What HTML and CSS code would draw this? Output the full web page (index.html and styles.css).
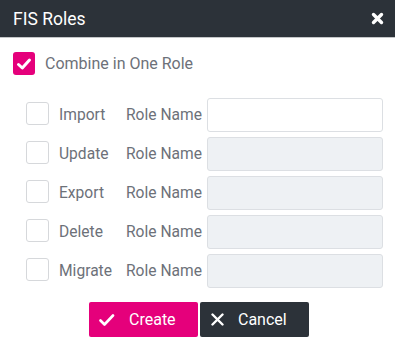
FILE: index.html
```html
<!DOCTYPE html>
<html lang="en">
<head>
    <meta charset="UTF-8">
    <title>FIS Roles</title>
    <link rel="stylesheet" href="styles.css">
</head>
<body>
    <!-- Dialog -->
    <div class="dialog">
        <div class="dialog-header">
            <span class="dialog-title">FIS Roles</span>
            <svg class="close" width="13" height="13" viewBox="0 0 13 13">
                <path d="M2.5 2.5 L10.5 10.5 M10.5 2.5 L2.5 10.5" stroke="#fff" stroke-width="3.4" stroke-linecap="round"/>
            </svg>
        </div>

        <div class="dialog-body">
            <label class="combine">
                <span class="check checked">
                    <svg width="16" height="16" viewBox="0 0 16 16">
                        <path d="M2.5 8.5 L6.3 12 L13.5 4" fill="none" stroke="#fff" stroke-width="3" stroke-linecap="round" stroke-linejoin="round"/>
                    </svg>
                </span>
                Combine in One Role
            </label>

            <div class="roles">
                <div class="role-row">
                    <span class="check"></span>
                    <span class="role-label">Import</span>
                    <span class="name-label">Role Name</span>
                    <input class="role-input" type="text">
                </div>
                <div class="role-row">
                    <span class="check"></span>
                    <span class="role-label">Update</span>
                    <span class="name-label">Role Name</span>
                    <input class="role-input" type="text" disabled>
                </div>
                <div class="role-row">
                    <span class="check"></span>
                    <span class="role-label">Export</span>
                    <span class="name-label">Role Name</span>
                    <input class="role-input" type="text" disabled>
                </div>
                <div class="role-row">
                    <span class="check"></span>
                    <span class="role-label">Delete</span>
                    <span class="name-label">Role Name</span>
                    <input class="role-input" type="text" disabled>
                </div>
                <div class="role-row">
                    <span class="check"></span>
                    <span class="role-label">Migrate</span>
                    <span class="name-label">Role Name</span>
                    <input class="role-input" type="text" disabled>
                </div>
            </div>

            <div class="actions">
                <button class="btn btn-create">
                    <svg width="16" height="14" viewBox="0 0 16 14">
                        <path d="M1.5 7.5 L5.5 11.5 L14 2.5" fill="none" stroke="#fff" stroke-width="2.6" stroke-linecap="round" stroke-linejoin="round"/>
                    </svg>
                    Create
                </button>
                <button class="btn btn-cancel">
                    <svg width="13" height="13" viewBox="0 0 13 13">
                        <path d="M1.5 1.5 L11.5 11.5 M11.5 1.5 L1.5 11.5" stroke="#fff" stroke-width="2.4" stroke-linecap="round"/>
                    </svg>
                    Cancel
                </button>
            </div>
        </div>
    </div>
</body>
</html>
```

FILE: styles.css
```css
/* Page */
body {
    margin: 0;
    background: #fff;
    font-family: Roboto, "Liberation Sans", sans-serif;
}

.dialog {
    width: 395px;
}

/* Header */
.dialog-header {
    height: 37px;
    background: #2c3239;
    border-bottom: 1px solid #c4c6c8;
    display: flex;
    align-items: center;
    justify-content: space-between;
    padding: 0 11px 0 13px;
}

.dialog-title {
    color: #fff;
    font-size: 17.5px;
    margin-top: 1px;
}

.close {
    margin-top: -1px;
}

/* Body */
.dialog-body {
    padding-top: 14px;
}

.check {
    width: 21px;
    height: 21px;
    border: 1px solid #d6d8db;
    border-radius: 3px;
    background: #fff;
    display: flex;
    align-items: center;
    justify-content: center;
    flex: none;
}

.check.checked {
    width: 22px;
    height: 23px;
    border: none;
    background: #e5007b;
}

.combine {
    display: flex;
    align-items: center;
    gap: 10px;
    padding-left: 13px;
    font-size: 16px;
    color: #6d7179;
}

/* Role rows */
.roles {
    margin-top: 23px;
    padding-left: 26px;
    display: flex;
    flex-direction: column;
    gap: 5px;
}

.role-row {
    display: flex;
    align-items: center;
    font-size: 15.6px;
    color: #6d7179;
}

.role-row .check {
    margin-top: -3px;
}

.role-label {
    margin-left: 10px;
    width: 67px;
}

.name-label {
    width: 81px;
}

.role-input {
    box-sizing: border-box;
    width: 176px;
    height: 34px;
    margin: 0;
    border: 1px solid #dcdfe3;
    border-radius: 3px;
    background: #fff;
}

.role-input:disabled {
    background: #eef1f4;
}

/* Buttons */
.actions {
    margin-top: 14px;
    display: flex;
    justify-content: center;
    gap: 2px;
    padding-left: 3px;
}

.btn {
    width: 109px;
    height: 35px;
    border: none;
    border-radius: 2px;
    color: #fff;
    font-family: Roboto, "Liberation Sans", sans-serif;
    font-size: 16px;
    display: flex;
    align-items: center;
    gap: 14px;
    padding: 0 0 0 10px;
}

.btn-create {
    background: #e5007b;
}

.btn-cancel {
    background: #2c3239;
    padding-left: 11px;
}
```
